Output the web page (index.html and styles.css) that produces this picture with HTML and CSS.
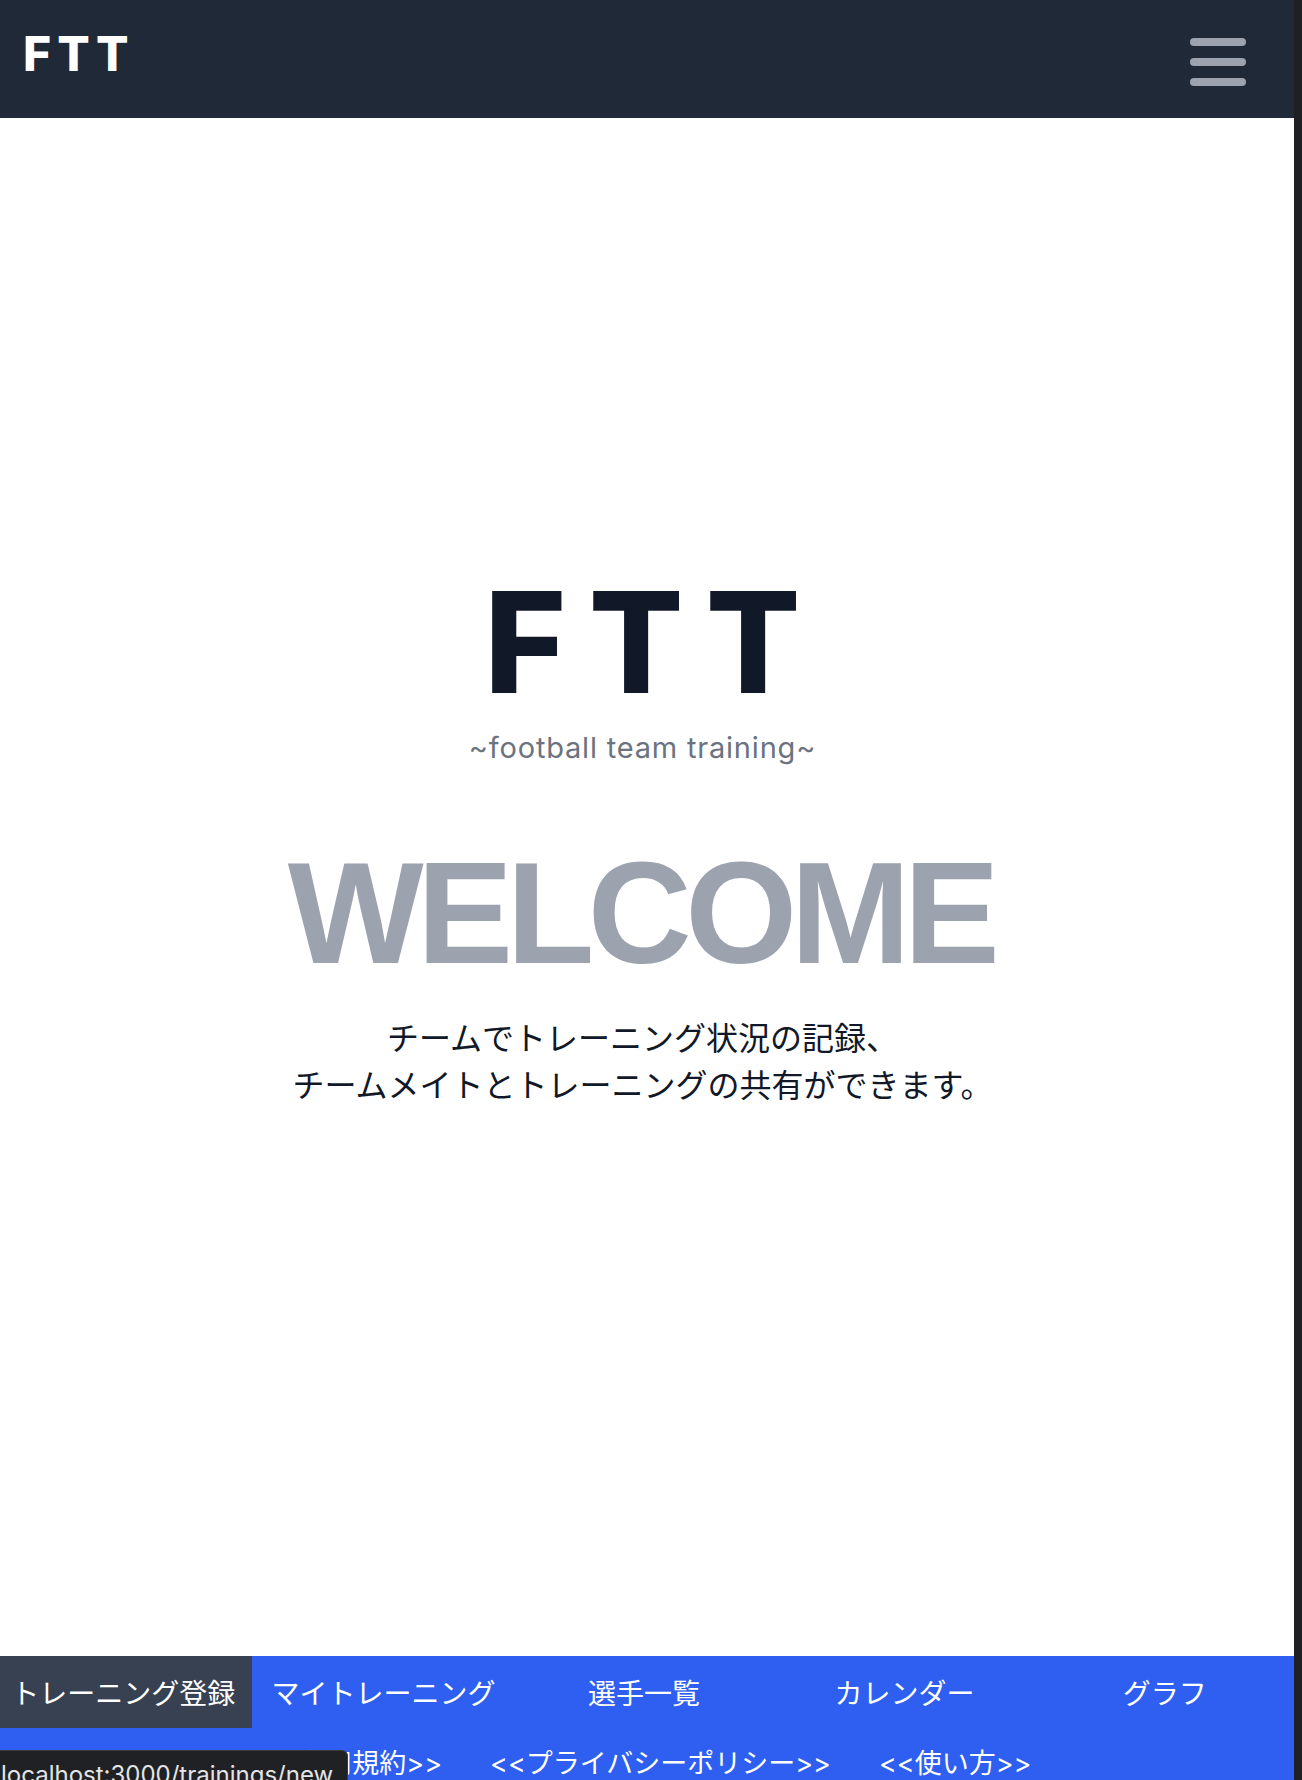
FILE: index.html
```html
<!DOCTYPE html>
<html lang="ja">
<head>
<meta charset="utf-8">
<title>FTT</title>
<link rel="stylesheet" href="styles.css">
</head>
<body>
<div class="page">
  <header class="topbar">
    <a class="brand" href="#">FTT</a>
    <button class="menu-btn" type="button" aria-label="menu">
      <span class="bar"></span>
      <span class="bar"></span>
      <span class="bar"></span>
    </button>
  </header>
  <main class="hero">
    <h1 class="hero-logo">FTT</h1>
    <p class="hero-sub">~football team training~</p>
    <h2 class="hero-welcome">WELCOME</h2>
    <p class="hero-desc">チームでトレーニング状況の記録、<br>チームメイトとトレーニングの共有ができます。</p>
  </main>
  <footer class="bottom-nav">
    <nav class="nav-main">
      <a class="nav-item is-hover" href="#">トレーニング登録</a>
      <a class="nav-item" href="#">マイトレーニング</a>
      <a class="nav-item" href="#">選手一覧</a>
      <a class="nav-item" href="#">カレンダー</a>
      <a class="nav-item" href="#">グラフ</a>
    </nav>
    <nav class="nav-sub">
      <a class="sub-item" href="#">&lt;&lt;利用規約&gt;&gt;</a>
      <a class="sub-item" href="#">&lt;&lt;プライバシーポリシー&gt;&gt;</a>
      <a class="sub-item" href="#">&lt;&lt;使い方&gt;&gt;</a>
    </nav>
  </footer>
</div>
<div class="scroll-strip"></div>
<div class="status-bubble">localhost:3000/trainings/new</div>
</body>
</html>
```

FILE: styles.css
```css
* { box-sizing: border-box; }
html, body {
  margin: 0;
  padding: 0;
  height: 1780px;
  overflow: hidden;
  background: #ffffff;
}
body {
  display: flex;
  font-family: Inter, "Noto Sans CJK JP", sans-serif;
}
.page {
  flex: 1;
  display: flex;
  flex-direction: column;
  min-width: 0;
}
.scroll-strip {
  width: 8px;
  flex: none;
  background: #1f2024;
}
.topbar {
  height: 118px;
  flex: none;
  background: #1f2937;
  display: flex;
  align-items: center;
  justify-content: space-between;
  padding: 0 48px 0 23px;
}
.brand {
  color: #ffffff;
  text-decoration: none;
  font-family: Inter, sans-serif;
  font-weight: 800;
  font-size: 48px;
  letter-spacing: 0.13em;
  line-height: 1;
  margin-top: -10px;
}
.menu-btn {
  background: none;
  border: 0;
  padding: 0;
  width: 56px;
  display: flex;
  flex-direction: column;
  gap: 12px;
  margin-top: 6px;
}
.bar {
  display: block;
  height: 8px;
  width: 56px;
  border-radius: 4px;
  background: #9ca3af;
}
.hero {
  height: 1538px;
  flex: none;
  display: flex;
  flex-direction: column;
  align-items: center;
  padding: 454px 9px 0 0;
}
.hero-logo {
  margin: 0 -0.16em 0 0;
  font-family: Inter, sans-serif;
  font-weight: 800;
  font-size: 140px;
  line-height: 1;
  letter-spacing: 0.16em;
  color: #111827;
}
.hero-sub {
  margin: 16px 0 0;
  font-size: 29px;
  line-height: 40px;
  letter-spacing: 0.8px;
  color: #6b7280;
}
.hero-welcome {
  margin: 74px 4px 0 0;
  font-family: "Liberation Sans", Arial, sans-serif;
  font-weight: 700;
  font-size: 144px;
  line-height: 1;
  letter-spacing: -0.046em;
  color: #9ca3af;
}
.hero-desc {
  margin: 29px 0 0;
  font-size: 32px;
  line-height: 47px;
  text-align: center;
  color: #111827;
}
.bottom-nav {
  flex: none;
  background: #2f5ff0;
}
.nav-main {
  display: grid;
  grid-template-columns: repeat(5, 1fr);
  column-gap: 8px;
}
.nav-item {
  height: 72px;
  display: flex;
  align-items: center;
  justify-content: center;
  padding-right: 6px;
  color: #ffffff;
  text-decoration: none;
  font-size: 28px;
  white-space: nowrap;
}
.nav-item.is-hover {
  background: #374151;
}
.nav-sub {
  display: flex;
  justify-content: center;
  gap: 48px;
  padding-top: 16px;
}
.sub-item {
  color: #ffffff;
  text-decoration: none;
  font-size: 27px;
  line-height: 40px;
  white-space: nowrap;
}
.status-bubble {
  position: fixed;
  left: 0;
  top: 1750px;
  height: 44px;
  padding: 9px 14px 0 1px;
  background: #202124;
  border: 1px solid #3a3b3e;
  border-left: 0;
  border-top-right-radius: 6px;
  color: #e4e4e4;
  font-family: Inter, sans-serif;
  font-size: 24px;
  line-height: 30px;
  white-space: nowrap;
}
```
